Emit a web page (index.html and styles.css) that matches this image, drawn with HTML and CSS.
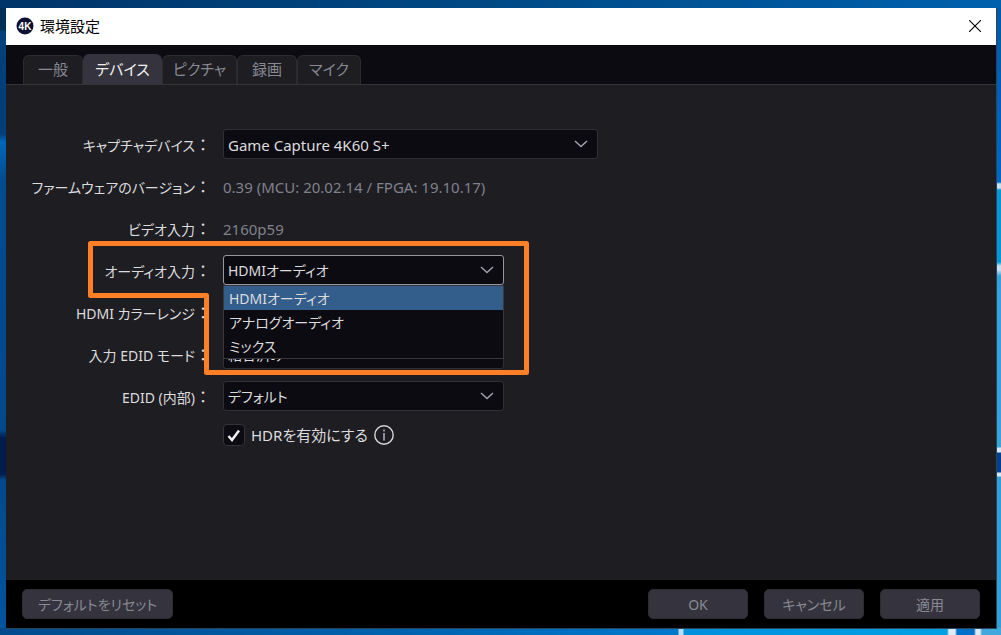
FILE: index.html
```html
<!DOCTYPE html>
<html lang="ja">
<head>
    <meta charset="UTF-8">
    <meta name="viewport" content="width=device-width, initial-scale=1.0">
    <link rel="stylesheet" href="styles.css">
    <title>環境設定</title>
</head>

<body>
    <div class="window">
        <header class="titlebar">
            <svg class="logo" viewBox="0 0 18 18" aria-hidden="true">
                <circle cx="9" cy="9" r="8.5" fill="#0d1030"/>
                <text x="9" y="13" text-anchor="middle">4K</text>
            </svg>
            <h1>環境設定</h1>
            <button class="close" aria-label="閉じる">
                <svg viewBox="0 0 12 12" width="12" height="12"><path d="M0 0L12 12M12 0L0 12" stroke="#000" stroke-width="1.1"/></svg>
            </button>
        </header>

        <nav class="tabs" role="tablist">
            <button class="tab" role="tab">一般</button>
            <button class="tab active" role="tab" aria-selected="true">デバイス</button>
            <button class="tab" role="tab">ピクチャ</button>
            <button class="tab" role="tab">録画</button>
            <button class="tab" role="tab">マイク</button>
        </nav>

        <main class="settings">
            <label for="device">キャプチャデバイス<span class="colon">：</span></label>
            <select id="device" class="wide"><option>Game Capture 4K60 S+</option></select>

            <span class="label">ファームウェアのバージョン<span class="colon">：</span></span>
            <span class="value">0.39 (MCU: 20.02.14 / FPGA: 19.10.17)</span>

            <span class="label">ビデオ入力<span class="colon">：</span></span>
            <span class="value">2160p59</span>

            <label for="audio">オーディオ入力<span class="colon">：</span></label>
            <div class="field">
                <select id="audio" class="open">
                    <option>HDMIオーディオ</option>
                    <option>アナログオーディオ</option>
                    <option>ミックス</option>
                </select>
                <ul class="menu" role="listbox" aria-label="オーディオ入力">
                    <li role="option" class="selected" aria-selected="true">HDMIオーディオ</li>
                    <li role="option">アナログオーディオ</li>
                    <li role="option">ミックス</li>
                </ul>
                <svg class="callout" viewBox="0 0 441 134" aria-hidden="true">
                    <path d="M2.5 2.5H438.5V131.5H118.5V54.5H2.5Z" fill="none" stroke="#ff7f27" stroke-width="5" stroke-linejoin="round"/>
                </svg>
            </div>

            <label for="range">HDMI カラーレンジ<span class="colon">：</span></label>
            <select id="range"><option>自動</option></select>

            <label for="edid-mode">入力 EDID モード<span class="colon">：</span></label>
            <select id="edid-mode"><option>結合済み</option></select>

            <label for="edid">EDID (内部)<span class="colon">：</span></label>
            <select id="edid"><option>デフォルト</option></select>

            <div class="check-row">
                <input type="checkbox" id="hdr" checked>
                <label for="hdr">HDRを有効にする</label>
                <button class="info" aria-label="情報">
                    <svg viewBox="0 0 20 20" width="20" height="20">
                        <circle cx="10" cy="10" r="9.2" fill="none" stroke="#d8d8da" stroke-width="1.4"/>
                        <path d="M9 4.5h2v2H9zM9 8h2v7.5H9z" fill="#8d8e98"/>
                    </svg>
                </button>
            </div>
        </main>

        <footer class="actions">
            <button class="reset">デフォルトをリセット</button>
            <button>OK</button>
            <button>キャンセル</button>
            <button>適用</button>
        </footer>
    </div>
</body>
</html>
```

FILE: styles.css
```css
* {
    box-sizing: border-box;
}

html {
    height: 100%;
}

/* desktop wallpaper showing around the window */
body {
    margin: 0;
    height: 100%;
    padding: 8px 4px 6px 6px;
    background-image:
        linear-gradient(90deg, #003468, #004a86 50%, #0061ae),
        linear-gradient(90deg, #004b8c, #0062ae 400px, #0078cc 678px, #b8dcf0 679px, #b8dcf0 683px, #0090dc 684px, #00a0e4 947px, #e0eaf0 949px, #e0eaf0 955px, #0070c8 957px, #0070c8 974px, #e0eaf0 976px, #e0eaf0 980px, #40a8dc 982px),
        linear-gradient(#003058 30px, #00417c 31px, #003f78 134px, #0068bc 142px, #004c90 180px, #004a8c 430px, #001c4c 438px, #001c4c 474px, #004a8c 480px, #0054a0),
        linear-gradient(#0058a8, #0068c4 182px, #c8e0ec 184px, #c8e0ec 188px, #0098d8 190px, #0098d8 262px, #c8e0ec 266px, #c8e0ec 270px, #38a0d8 276px, #38a4d8 447px, #d8e8f0 448px, #d8e8f0 452px, #00408c 453px, #00408c 472px, #d8e8f0 473px, #d8e8f0 476px, #30a0d4 477px);
    background-repeat: no-repeat;
    background-position: top, bottom, left, right;
    background-size: 100% 8px, 100% 7px, 6px 100%, 6px 100%;
    font-family: "Noto Sans", "Noto Sans CJK JP", sans-serif;
    font-size: 15px;
    line-height: 24px;
    color: #dcdcde;
}

button,
select,
input {
    font: inherit;
    color: inherit;
    margin: 0;
}

button,
select,
label,
.label,
.menu {
    font-feature-settings: "palt";
}

.window {
    height: 100%;
    display: flex;
    flex-direction: column;
    background: #1e1d22;
    border-right: 1px solid #27465c;
    border-bottom: 1px solid #27465c;
}

.titlebar {
    display: flex;
    align-items: center;
    gap: 6px;
    height: 37px;
    padding: 0 15px 1px 10px;
    background: #fff;
    color: #000;
}

.titlebar h1 {
    margin: 0;
    font-size: 15px;
    font-weight: 400;
    flex: 1;
}

.logo {
    width: 18px;
    height: 18px;
}

.logo text {
    font: bold 10px "Liberation Sans", sans-serif;
    fill: #fff;
}

.close,
.info {
    display: flex;
    padding: 0;
    border: 0;
    background: none;
}

.tabs {
    display: grid;
    grid-template-columns: 60px 79px 75px 60px 64px;
    align-items: end;
    height: 40px;
    padding-left: 17px;
    background: #0c0b11;
    border-bottom: 1px solid #333337;
}

.tab {
    height: 29px;
    padding: 0 0 2px;
    border: 1px solid #2c2c30;
    border-bottom: 0;
    border-radius: 6px 6px 0 0;
    background: #1e1d22;
    color: #888993;
}

.tab.active {
    height: 30px;
    background: #35343e;
    border-color: #35343e;
    color: #f0f0f0;
}

.settings {
    flex: 1;
    display: grid;
    grid-template-columns: 205px 1fr;
    grid-auto-rows: 30px;
    align-content: start;
    align-items: center;
    gap: 12px;
    padding-top: 44px;
}

.settings > label,
.label {
    padding-top: 2px;
    font-size: 14px;
    text-align: right;
}

.colon {
    font-size: 16px;
    font-feature-settings: normal;
}

.value {
    padding-top: 2px;
    color: #80818b;
}

select {
    appearance: none;
    width: 281px;
    height: 30px;
    padding: 2px 4px 0;
    font-size: 14px;
    border: 1px solid #303034;
    border-radius: 3px;
    background: #0c0b11 url('data:image/svg+xml,<svg xmlns="http://www.w3.org/2000/svg" width="14" height="8"><path d="M1 1L7 6.500L13 1" fill="none" stroke="%23a0a0a8" stroke-width="1.500"/></svg>') no-repeat right 9px center;
}

.wide {
    width: 375px;
    font-size: 15px;
}

.open {
    border-color: #96979d;
}

.field {
    position: relative;
    height: 30px;
}

.field select {
    display: block;
}

.menu {
    position: absolute;
    z-index: 1;
    top: 30px;
    left: 0;
    width: 281px;
    margin: 0;
    padding: 0;
    font-size: 14px;
    list-style: none;
    background: #0c0b11;
    border: 1px solid #38383c;
}

.menu li {
    height: 24px;
    padding: 1px 0 0 5px;
}

.menu .selected {
    background: #335d8a;
}

/* highlight drawn around the audio input row and its list */
.callout {
    position: absolute;
    z-index: 2;
    top: -14px;
    left: -135px;
    width: 441px;
    height: 134px;
    pointer-events: none;
}

.check-row {
    grid-column: 2;
    align-self: start;
    display: flex;
    align-items: center;
    gap: 6px;
}

.check-row input {
    appearance: none;
    width: 22px;
    height: 22px;
    border: 1px solid #343438;
    border-radius: 4px;
    background: #0c0b11 url('data:image/svg+xml,<svg xmlns="http://www.w3.org/2000/svg" width="14" height="13"><path d="M1.500 7L5 11L12 1.500" fill="none" stroke="%23eee" stroke-width="2.500"/></svg>') no-repeat center;
}

.actions {
    display: flex;
    align-items: center;
    gap: 16px;
    height: 48px;
    padding: 0 16px;
    background: #000;
}

.actions button {
    min-width: 100px;
    height: 30px;
    padding: 1px 15px 0;
    font-size: 14px;
    border: 1px solid #2c2c32;
    border-radius: 5px;
    background: #35343e;
    color: #888993;
}

.actions .reset {
    margin-right: auto;
}
```
